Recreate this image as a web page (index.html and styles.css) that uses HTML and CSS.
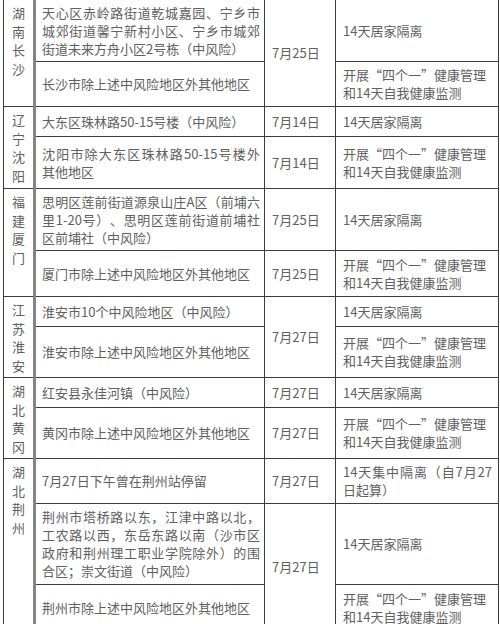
FILE: index.html
```html
<!DOCTYPE html>
<html lang="zh-CN">
<head>
<meta charset="utf-8">
<title>中风险地区及管控措施</title>
<link rel="stylesheet" href="styles.css">
</head>
<body>
<table class="grid">
  <colgroup>
    <col class="c-prov">
    <col class="c-area">
    <col class="c-date">
    <col class="c-meas">
  </colgroup>
  <tbody>
    <tr class="h62">
      <td class="prov" rowspan="2"><span>湖南长沙</span></td>
      <td class="area">天心区赤岭路街道乾城嘉园、宁乡市城郊街道馨宁新村小区、宁乡市城郊街道未来方舟小区2号栋（中风险）</td>
      <td class="date" rowspan="2">7月25日</td>
      <td class="meas">14天居家隔离</td>
    </tr>
    <tr class="h45">
      <td class="area">长沙市除上述中风险地区外其他地区</td>
      <td class="meas">开展“四个一”健康管理<br>和14天自我健康监测</td>
    </tr>
    <tr class="h30">
      <td class="prov" rowspan="2"><span>辽宁沈阳</span></td>
      <td class="area">大东区珠林路50-15号楼（中风险）</td>
      <td class="date">7月14日</td>
      <td class="meas">14天居家隔离</td>
    </tr>
    <tr class="h52">
      <td class="area"><span class="line">沈阳市除大东区珠林路50-15号楼外</span>其他地区</td>
      <td class="date">7月14日</td>
      <td class="meas">开展“四个一”健康管理<br>和14天自我健康监测</td>
    </tr>
    <tr class="h62">
      <td class="prov" rowspan="2"><span>福建厦门</span></td>
      <td class="area">思明区莲前街道源泉山庄A区（前埔六里1-20号）、思明区莲前街道前埔社区前埔社（中风险）</td>
      <td class="date">7月25日</td>
      <td class="meas">14天居家隔离</td>
    </tr>
    <tr class="h46">
      <td class="area">厦门市除上述中风险地区外其他地区</td>
      <td class="date">7月25日</td>
      <td class="meas">开展“四个一”健康管理<br>和14天自我健康监测</td>
    </tr>
    <tr class="h30">
      <td class="prov" rowspan="2"><span>江苏淮安</span></td>
      <td class="area">淮安市10个中风险地区（中风险）</td>
      <td class="date" rowspan="2">7月27日</td>
      <td class="meas">14天居家隔离</td>
    </tr>
    <tr class="h51">
      <td class="area">淮安市除上述中风险地区外其他地区</td>
      <td class="meas">开展“四个一”健康管理<br>和14天自我健康监测</td>
    </tr>
    <tr class="h30">
      <td class="prov" rowspan="2"><span>湖北黄冈</span></td>
      <td class="area">红安县永佳河镇（中风险）</td>
      <td class="date">7月27日</td>
      <td class="meas">14天居家隔离</td>
    </tr>
    <tr class="h51">
      <td class="area">黄冈市除上述中风险地区外其他地区</td>
      <td class="date">7月27日</td>
      <td class="meas">开展“四个一”健康管理<br>和14天自我健康监测</td>
    </tr>
    <tr class="h45">
      <td class="prov" rowspan="3"><span>湖北荆州</span></td>
      <td class="area">7月27日下午曾在荆州站停留</td>
      <td class="date">7月27日</td>
      <td class="meas">14天集中隔离（自7月27日起算）</td>
    </tr>
    <tr class="h81">
      <td class="area">荆州市塔桥路以东，江津中路以北，工农路以西，东岳东路以南（沙市区政府和荆州理工职业学院除外）的围合区；崇文街道（中风险）</td>
      <td class="date" rowspan="2">7月27日</td>
      <td class="meas">14天居家隔离</td>
    </tr>
    <tr class="h46">
      <td class="area">荆州市除上述中风险地区外其他地区</td>
      <td class="meas">开展“四个一”健康管理<br>和14天自我健康监测</td>
    </tr>
  </tbody>
</table>
</body>
</html>
```
FILE: styles.css
```css
html, body {
  margin: 0;
  padding: 0;
  background: #ffffff;
  overflow: hidden;
}

.grid {
  border-collapse: collapse;
  table-layout: fixed;
  width: 495px;
  margin: -1px 0 0 3px;
  font-family: "Noto Sans CJK SC", "Noto Sans", sans-serif;
  font-size: 13px;
  line-height: 18px;
  color: #606060;
  text-spacing-trim: space-all;
}

.c-prov { width: 31px; }
.c-area { width: 230px; }
.c-date { width: 71px; }
.c-meas { width: 163px; }

.grid td {
  border: 1px solid #3c3c3c;
  vertical-align: middle;
  padding: 0;
}

.h30 { height: 30px; }
.h45 { height: 45px; }
.h46 { height: 46px; }
.h51 { height: 51px; }
.h52 { height: 52px; }
.h62 { height: 62px; }
.h81 { height: 81px; }

.grid td.prov {
  vertical-align: top;
  text-align: center;
  padding-top: 4px;
  line-height: 18.5px;
  border-right: 3px solid #858585;
}

.prov span {
  display: block;
  width: 1em;
  margin: 0 auto;
}

.grid td.area {
  border-left: 3px solid #858585;
  padding: 0 4px 0 6px;
  text-align: justify;
}

.area .line {
  display: block;
  text-align-last: justify;
}

.grid td.date {
  padding: 0 4px 0 7px;
}

.grid td.meas {
  padding: 0 6px 0 7px;
  text-align: justify;
}
```
